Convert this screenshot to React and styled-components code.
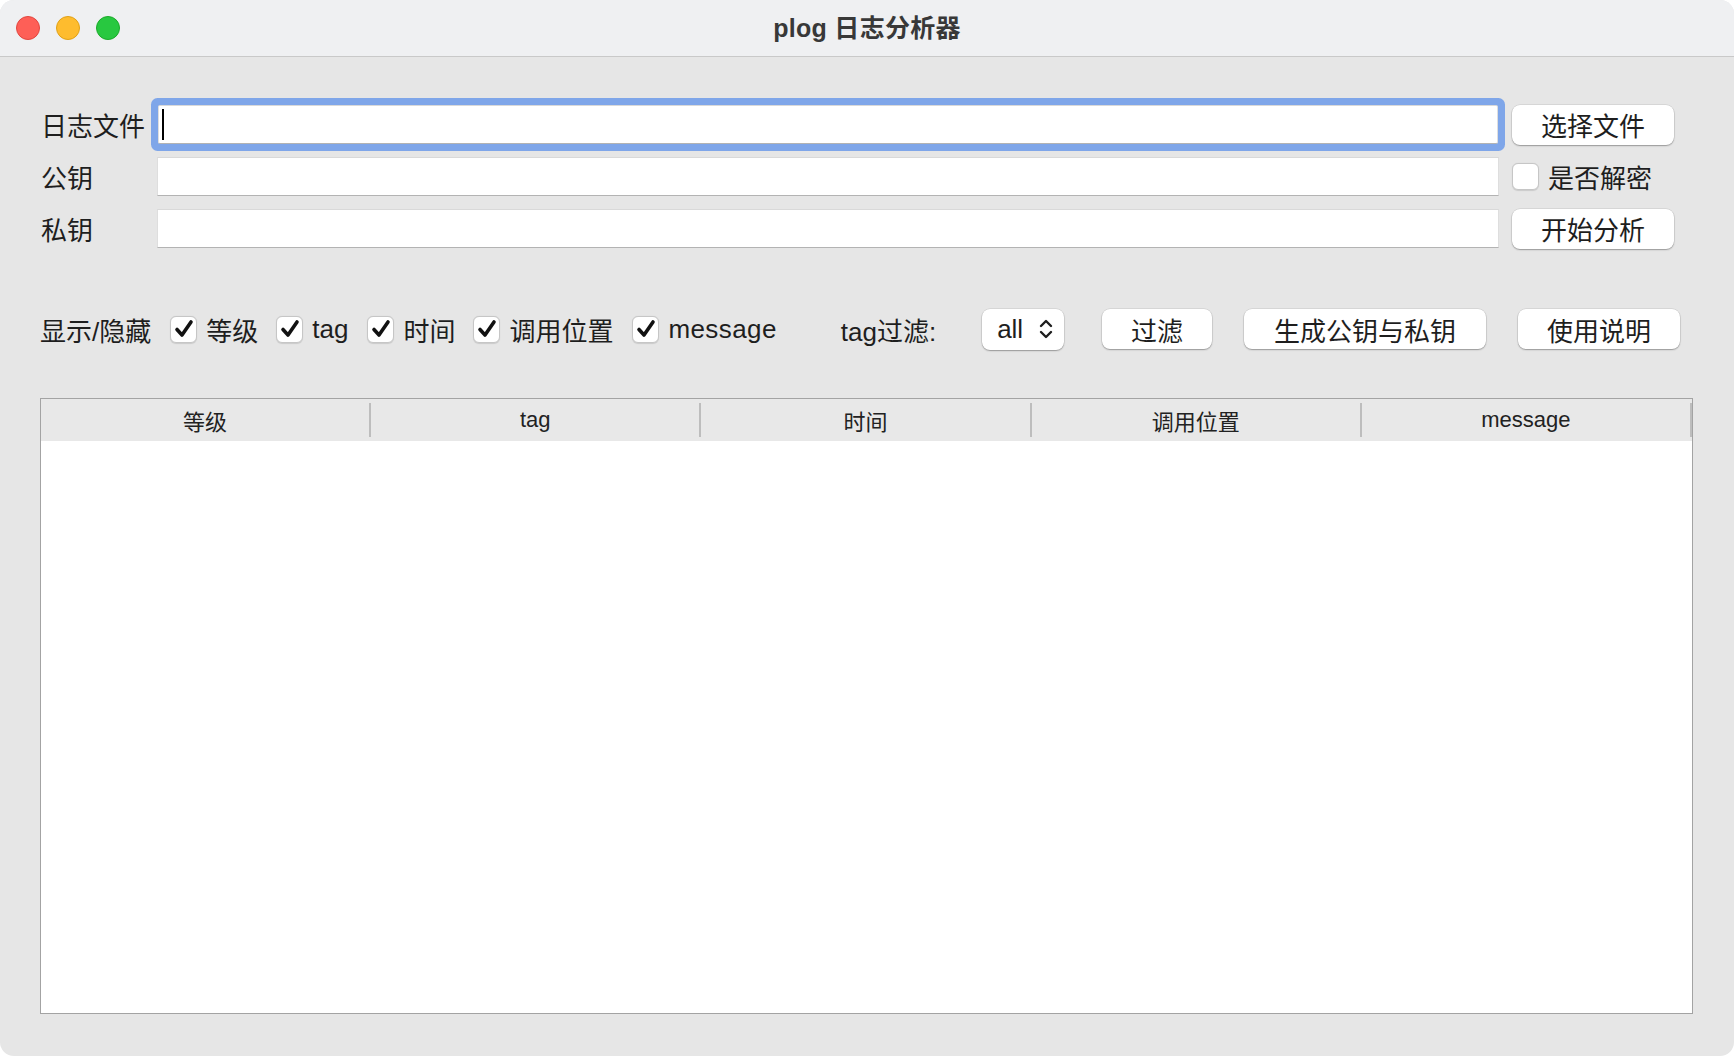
import React from "react";
import styled, { createGlobalStyle } from "styled-components";

const GlobalStyle = createGlobalStyle`
    html, body {
        margin: 0;
        padding: 0;
        background: #ffffff;
    }
    body {
        font-family: "Liberation Sans", "Noto Sans CJK SC", sans-serif;
        color: #1e1e1e;
    }
`;

const Window = styled.div`
    height: 100vh;
    display: flex;
    flex-direction: column;
    background-color: #e6e6e6;
    border-radius: 14px;
    overflow: hidden;
`;

const TitleBar = styled.div`
    height: 56px;
    display: grid;
    grid-template-columns: 1fr auto 1fr;
    align-items: center;
    background-color: #eff0f2;
    border-bottom: 1px solid #c9c9c9;
`;

const Lights = styled.div`
    display: flex;
    gap: 16px;
    padding-left: 16px;
`;

const Light = styled.span`
    width: 24px;
    height: 24px;
    border-radius: 50%;
    box-sizing: border-box;
    background-color: ${(p) => p.color};
    border: 1px solid ${(p) => p.edge};
`;

const Title = styled.div`
    font-size: 25px;
    font-weight: bold;
    color: #383838;
    letter-spacing: 0.3px;
    margin-bottom: 5px;
`;

const Content = styled.div`
    flex: 1;
    display: flex;
    flex-direction: column;
    padding: 48px 41px 42px 40px;
`;

const Form = styled.div`
    display: grid;
    grid-template-columns: 104px 1fr 162px;
    grid-auto-rows: 39px;
    column-gap: 13px;
    row-gap: 13px;
    align-items: center;
    padding-right: 19px;
`;

const Label = styled.div`
    font-size: 26px;
    padding-left: 1px;
    white-space: nowrap;
`;

const Field = styled.div`
    height: 39px;
    box-sizing: border-box;
    display: flex;
    align-items: center;
    padding-left: 3px;
    background: #ffffff;
    border-top: 1px solid #d9d9d9;
    border-bottom: 1px solid #b3b3b3;
    border-left: 1px solid #dedede;
    border-right: 1px solid #dedede;
    border-radius: ${(p) => (p.focused ? "2px" : "0")};
    box-shadow: ${(p) => (p.focused ? "0 0 0 7px #7fa6e9" : "none")};
    margin: ${(p) => (p.focused ? "0 1px" : "0")};
`;

const Caret = styled.span`
    width: 2px;
    height: 31px;
    background: #000000;
`;

const Button = styled.button`
    height: 40px;
    width: ${(p) => p.w || 162}px;
    margin-left: ${(p) => p.ml || 0}px;
    padding: 0;
    border: none;
    border-radius: 8px;
    background: #ffffff;
    box-shadow: 0 1px 1.5px rgba(0, 0, 0, 0.3), 0 0 0 0.5px rgba(0, 0, 0, 0.12);
    font-family: "Liberation Sans", "Noto Sans CJK SC", sans-serif;
    font-size: 26px;
    color: #1e1e1e;
    flex-shrink: 0;
`;

const Check = styled.label`
    display: flex;
    align-items: center;
    gap: 9px;
    font-size: 26px;
    white-space: nowrap;
    letter-spacing: ${(p) => (p.wide ? "0.4px" : "0")};
    margin-left: ${(p) => p.ml || 0}px;
`;

const Box = styled.span`
    width: 27px;
    height: 27px;
    box-sizing: border-box;
    border-radius: 6px;
    background: #ffffff;
    border: 1px solid #c6c6c6;
    box-shadow: 0 0.5px 1px rgba(0, 0, 0, 0.12);
    display: flex;
    align-items: center;
    justify-content: center;
    flex-shrink: 0;
`;

const Toolbar = styled.div`
    display: flex;
    align-items: center;
    height: 42px;
    margin-top: 60px;
`;

const ToolLabel = styled.div`
    font-size: 26px;
    white-space: nowrap;
    margin-left: ${(p) => p.ml || 0}px;
`;

const Select = styled.div`
    width: 82px;
    height: 41px;
    box-sizing: border-box;
    margin-left: 46px;
    display: flex;
    align-items: center;
    justify-content: space-between;
    padding: 0 10px 0 15px;
    background: #ffffff;
    border-radius: 8px;
    box-shadow: 0 1px 1.5px rgba(0, 0, 0, 0.3), 0 0 0 0.5px rgba(0, 0, 0, 0.12);
    font-size: 26px;
`;

const Table = styled.div`
    flex: 1;
    margin-top: 48px;
    display: flex;
    flex-direction: column;
    background: #ffffff;
    border: 1px solid #a3a3a3;
`;

const Header = styled.div`
    height: 42px;
    display: grid;
    grid-template-columns: repeat(5, 1fr);
    background: #e8e8e8;
`;

const HeaderCell = styled.div`
    display: flex;
    align-items: center;
    justify-content: center;
    font-size: 22px;
    color: #222222;
    margin: 4px 0;
    border-right: 2px solid #bdbdbd;
`;

const CheckMark = () => (
    <svg width="22" height="22" viewBox="0 0 22 22">
        <path
            d="M4 11.5 L9 17 L18 4"
            fill="none"
            stroke="#111"
            strokeWidth="3.6"
            strokeLinecap="round"
            strokeLinejoin="round"
        />
    </svg>
);

const Chevrons = () => (
    <svg width="16" height="22" viewBox="0 0 16 22">
        <path
            d="M3 8 L8 3 L13 8 M3 14 L8 19 L13 14"
            fill="none"
            stroke="#1e1e1e"
            strokeWidth="2.4"
            strokeLinecap="round"
            strokeLinejoin="round"
        />
    </svg>
);

const columns = ["等级", "tag", "时间", "调用位置", "message"];

const toggles = [
    { label: "等级", ml: 19 },
    { label: "tag", ml: 18 },
    { label: "时间", ml: 19 },
    { label: "调用位置", ml: 18 },
    { label: "message", ml: 19, wide: true },
];

const App = () => {
    return (
        <>
            <GlobalStyle />
            <Window>
                <TitleBar>
                    <Lights>
                        <Light color="#fe5f57" edge="#e2463f" />
                        <Light color="#febc2e" edge="#e1a116" />
                        <Light color="#28c840" edge="#1aab29" />
                    </Lights>
                    <Title>plog 日志分析器</Title>
                    <div />
                </TitleBar>
                <Content>
                    <Form>
                        <Label>日志文件</Label>
                        <Field focused>
                            <Caret />
                        </Field>
                        <Button>选择文件</Button>

                        <Label>公钥</Label>
                        <Field />
                        <Check>
                            <Box />
                            是否解密
                        </Check>

                        <Label>私钥</Label>
                        <Field />
                        <Button>开始分析</Button>
                    </Form>

                    <Toolbar>
                        <ToolLabel>显示/隐藏</ToolLabel>
                        {toggles.map((t) => (
                            <Check key={t.label} ml={t.ml} wide={t.wide}>
                                <Box>
                                    <CheckMark />
                                </Box>
                                {t.label}
                            </Check>
                        ))}
                        <ToolLabel ml={64}>tag过滤:</ToolLabel>
                        <Select>
                            all
                            <Chevrons />
                        </Select>
                        <Button w={110} ml={38}>
                            过滤
                        </Button>
                        <Button w={242} ml={32}>
                            生成公钥与私钥
                        </Button>
                        <Button w={162} ml={32}>
                            使用说明
                        </Button>
                    </Toolbar>

                    <Table>
                        <Header>
                            {columns.map((c) => (
                                <HeaderCell key={c}>{c}</HeaderCell>
                            ))}
                        </Header>
                    </Table>
                </Content>
            </Window>
        </>
    );
};

export default App;
